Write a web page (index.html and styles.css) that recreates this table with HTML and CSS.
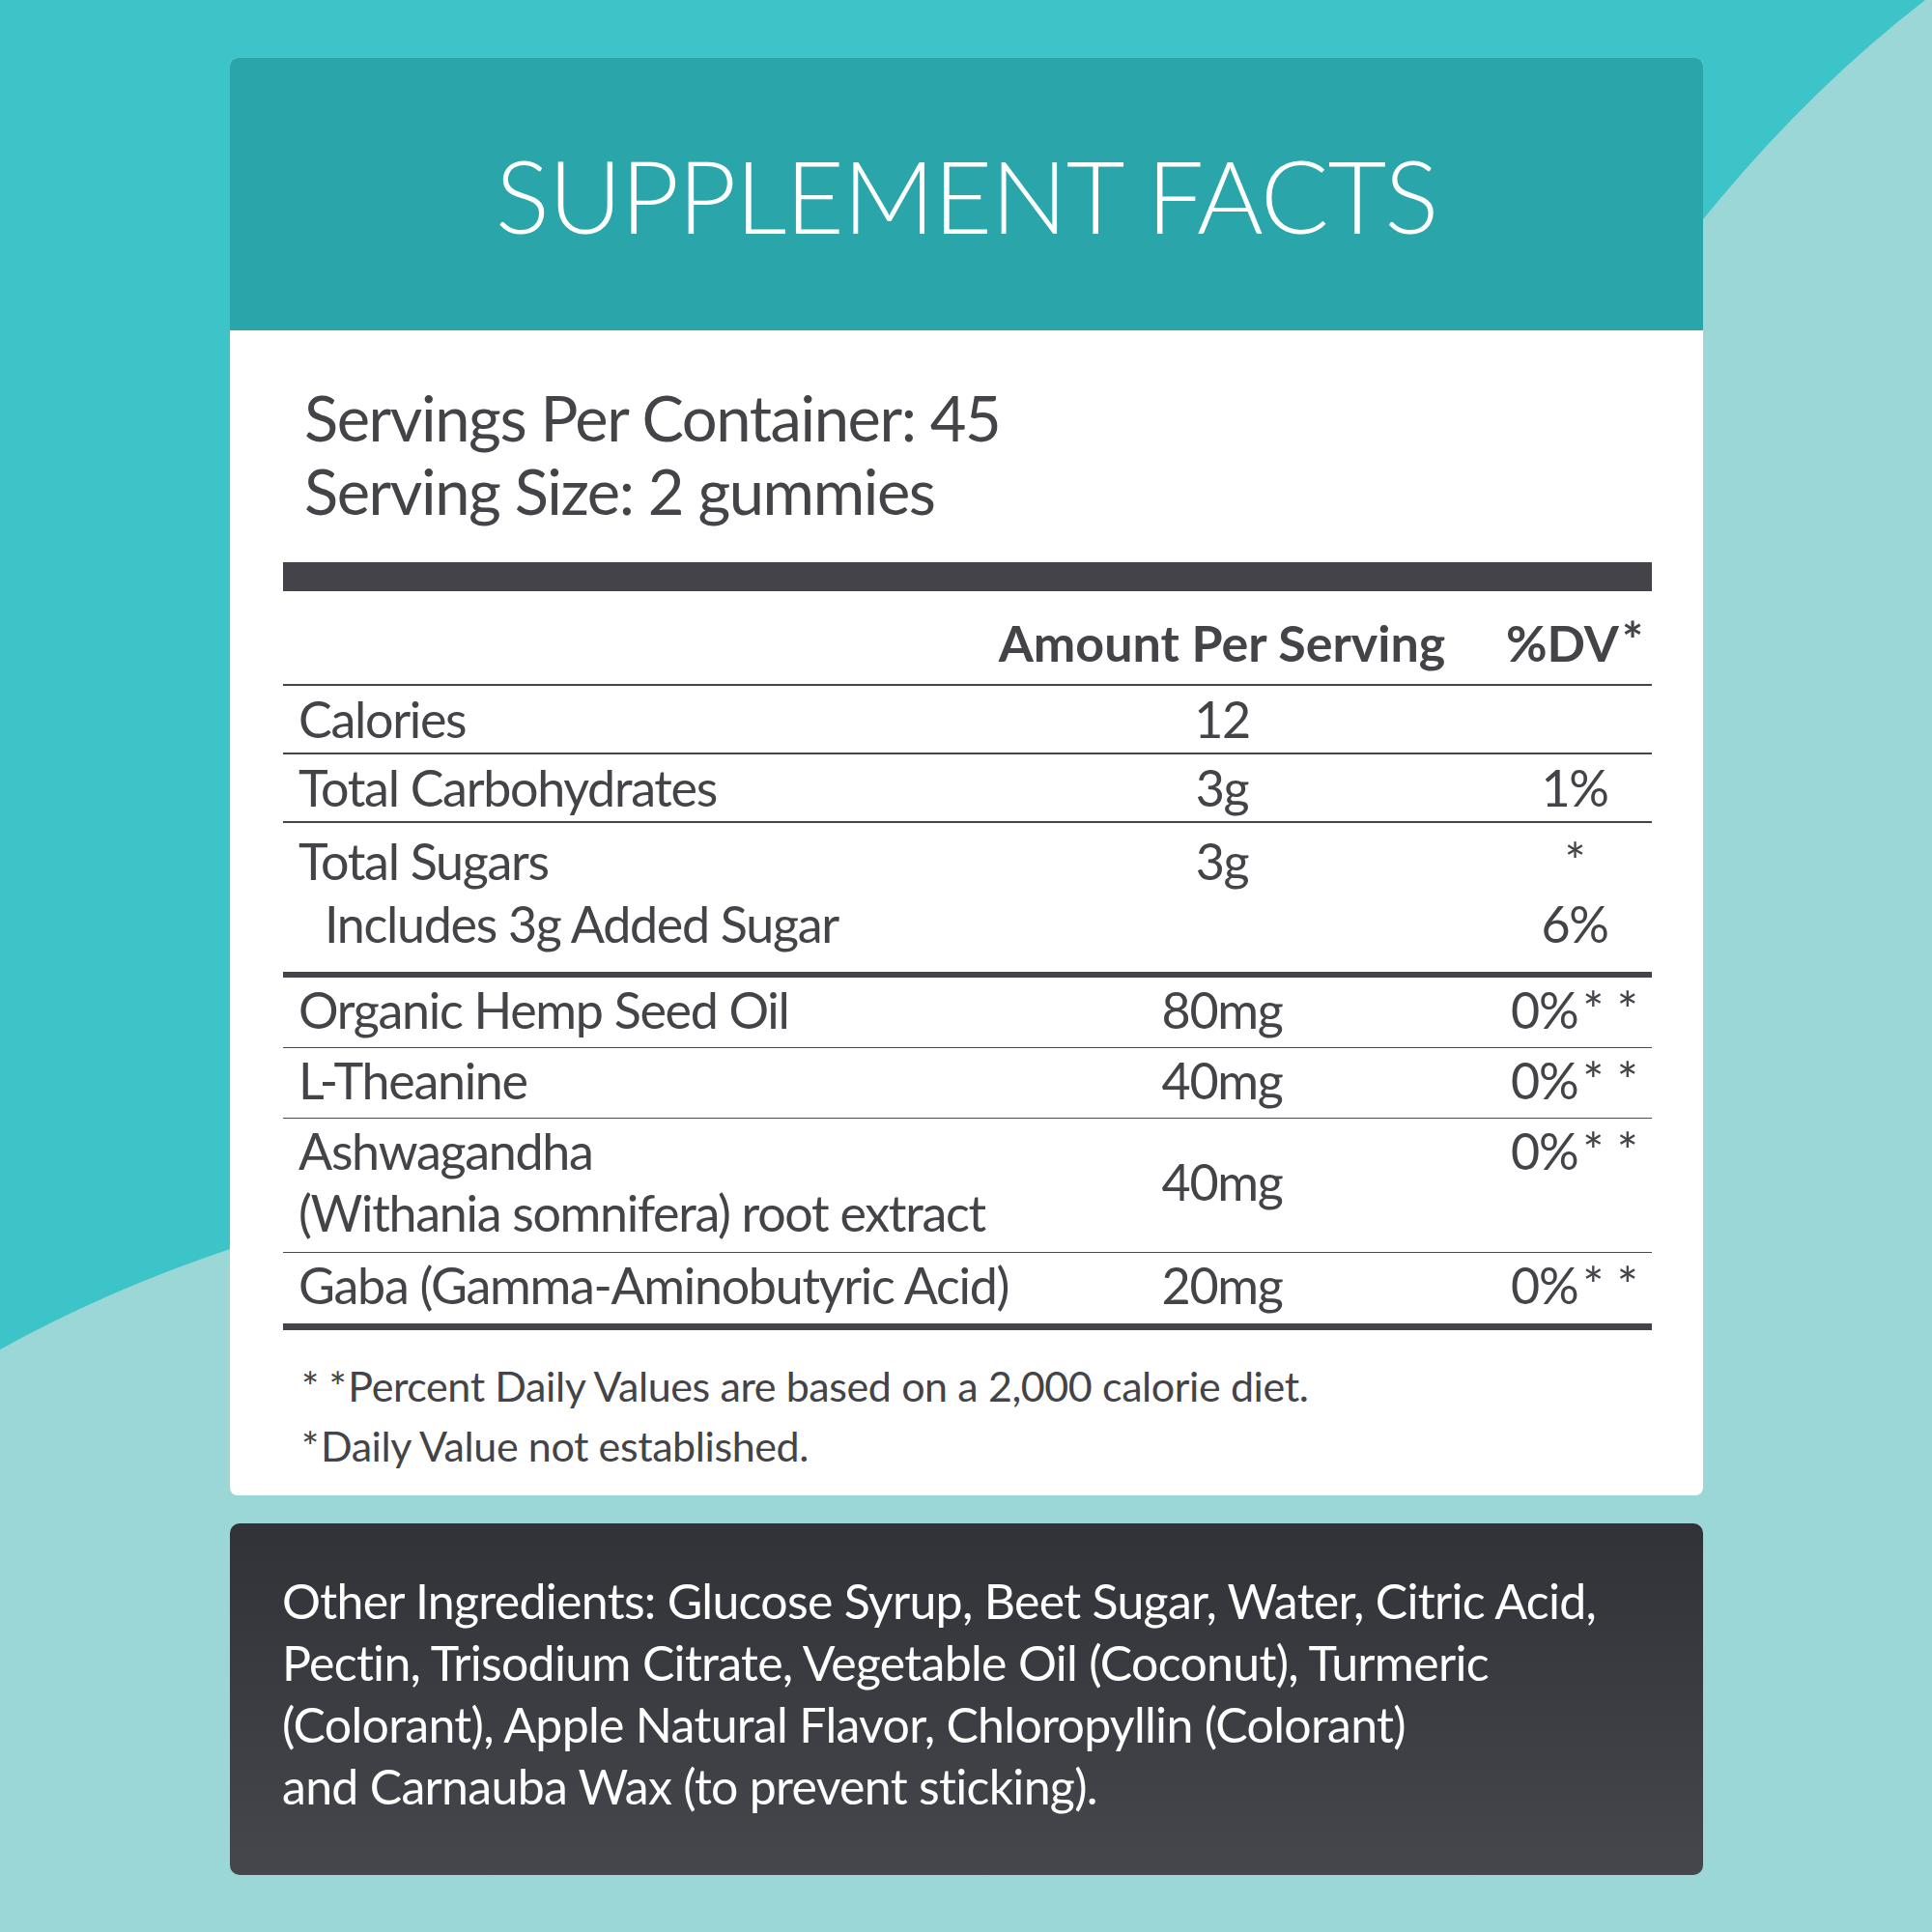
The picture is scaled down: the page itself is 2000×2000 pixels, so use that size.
FILE: index.html
```html
<!DOCTYPE html>
<html lang="en">
<head>
<meta charset="utf-8">
<title>Supplement Facts</title>
<link rel="stylesheet" href="styles.css">
</head>
<body>
<svg class="bg" width="2000" height="2000" viewBox="0 0 2000 2000" aria-hidden="true">
  <rect width="2000" height="2000" fill="#9ad7d6"/>
  <path d="M0 0 H1993 Q1870 95 1763 227 L1763 1200 L238 1293 Q110 1336 0 1397 Z" fill="#3cc4c9"/>
</svg>
<main class="page">
  <section class="card">
    <header class="card-head">
      <h1 class="title">SUPPLEMENT FACTS</h1>
    </header>
    <div class="card-body">
      <p class="serving">Servings Per Container: 45<br>Serving Size: 2 gummies</p>
      <div class="bar"></div>
      <div class="facts">
        <div class="row row-head">
          <span class="name"></span>
          <span class="amt">Amount Per Serving</span>
          <span class="dv">%DV<span class="sup">*</span></span>
        </div>
        <div class="row row-top">
          <span class="name">Calories</span>
          <span class="amt">12</span>
          <span class="dv"></span>
        </div>
        <div class="row row-top">
          <span class="name">Total Carbohydrates</span>
          <span class="amt">3g</span>
          <span class="dv">1%</span>
        </div>
        <div class="row row-sugar">
          <span class="name">Total Sugars<br><span class="indent">Includes 3g Added Sugar</span></span>
          <span class="amt">3g</span>
          <span class="dv dv-stack"><span>*</span><span>6%</span></span>
        </div>
        <div class="row row-thin">
          <span class="name">Organic Hemp Seed Oil</span>
          <span class="amt">80mg</span>
          <span class="dv">0%<span class="stars">* *</span></span>
        </div>
        <div class="row row-thin">
          <span class="name">L-Theanine</span>
          <span class="amt">40mg</span>
          <span class="dv">0%<span class="stars">* *</span></span>
        </div>
        <div class="row row-thin row-tall">
          <span class="name">Ashwagandha<br>(Withania somnifera) root extract</span>
          <span class="amt amt-mid">40mg</span>
          <span class="dv">0%<span class="stars">* *</span></span>
        </div>
        <div class="row row-last">
          <span class="name">Gaba (Gamma-Aminobutyric Acid)</span>
          <span class="amt">20mg</span>
          <span class="dv">0%<span class="stars">* *</span></span>
        </div>
      </div>
      <div class="notes">
        <p><span class="note-star">* *</span>Percent Daily Values are based on a 2,000 calorie diet.</p>
        <p><span class="note-star">*</span>Daily Value not established.</p>
      </div>
    </div>
  </section>
  <section class="ingredients">
    <p>Other Ingredients: Glucose Syrup, Beet Sugar, Water, Citric Acid,<br>Pectin, Trisodium Citrate, Vegetable Oil (Coconut), Turmeric<br>(Colorant), Apple Natural Flavor, Chloropyllin (Colorant)<br>and Carnauba Wax (to prevent sticking).</p>
  </section>
</main>
</body>
</html>
```
FILE: styles.css
```css
* {
  box-sizing: border-box;
  margin: 0;
  padding: 0;
}

html,
body {
  width: 2000px;
  height: 2000px;
}

body {
  position: relative;
  overflow: hidden;
  background: #9ad7d6;
  font-family: Lato, "Liberation Sans", sans-serif;
  color: #434348;
}

.bg {
  position: absolute;
  left: 0;
  top: 0;
  z-index: 0;
}

.page {
  position: relative;
  z-index: 1;
  padding: 60px 0 0 238px;
  display: flex;
  flex-direction: column;
  gap: 29px;
}

.card {
  width: 1525px;
  background: #ffffff;
  border-radius: 8px;
  overflow: hidden;
}

.card-head {
  height: 282px;
  background: #2aa6ab;
  display: flex;
  align-items: center;
  justify-content: center;
}

.title {
  font-weight: 300;
  font-size: 105px;
  line-height: 1;
  color: #ffffff;
  letter-spacing: -1.4px;
  white-space: nowrap;
}

.card-body {
  padding: 52px 53px 20px 55px;
}

.serving {
  padding-left: 22px;
  font-size: 65px;
  line-height: 76px;
  letter-spacing: -1.4px;
  white-space: nowrap;
}

.bar {
  height: 30px;
  margin-top: 36px;
  background: #434349;
}

.row {
  display: grid;
  grid-template-columns: 1fr 330px 280px;
  font-size: 52px;
  line-height: 64px;
  letter-spacing: -1.3px;
}

.name {
  padding-left: 16px;
  white-space: nowrap;
}

.indent {
  padding-left: 27px;
}

.amt,
.dv {
  display: flex;
  justify-content: center;
  white-space: nowrap;
}

.dv {
  padding-left: 120px;
}

.amt-mid {
  align-self: center;
}

.dv-stack {
  flex-direction: column;
  align-items: center;
  line-height: 65px;
}

.row-head {
  padding: 23px 0 13px;
  border-bottom: 2px solid #444449;
  font-size: 52px;
  line-height: 60px;
  font-weight: 700;
  letter-spacing: 0;
}

.row-top {
  padding: 2px 0 3px;
  border-bottom: 2px solid #444449;
}

.row-sugar {
  padding: 7px 0 17px;
  line-height: 65px;
  border-bottom: 6px solid #434349;
}

.row-thin {
  padding: 1px 0 7px;
  border-bottom: 1px solid #49494e;
}

.row-tall {
  padding-bottom: 9px;
}

.row-last {
  padding: 1px 0 8px;
  border-bottom: 7px solid #434349;
}

.sup {
  margin-left: 3px;
  position: relative;
  top: -0.05em;
}

.stars {
  margin-left: 5px;
  letter-spacing: 0;
}

.notes {
  margin-top: 27px;
  padding-left: 19px;
  font-size: 43px;
  line-height: 62px;
  letter-spacing: -0.4px;
  white-space: nowrap;
}

.note-star {
  margin-right: 2px;
}

.ingredients {
  width: 1525px;
  height: 364px;
  padding: 48px 40px 0 54px;
  border-radius: 10px;
  background: linear-gradient(180deg, #313237 0%, #46474c 100%);
  color: #ffffff;
  font-size: 50px;
  line-height: 64px;
  letter-spacing: -0.7px;
  white-space: nowrap;
}
```
